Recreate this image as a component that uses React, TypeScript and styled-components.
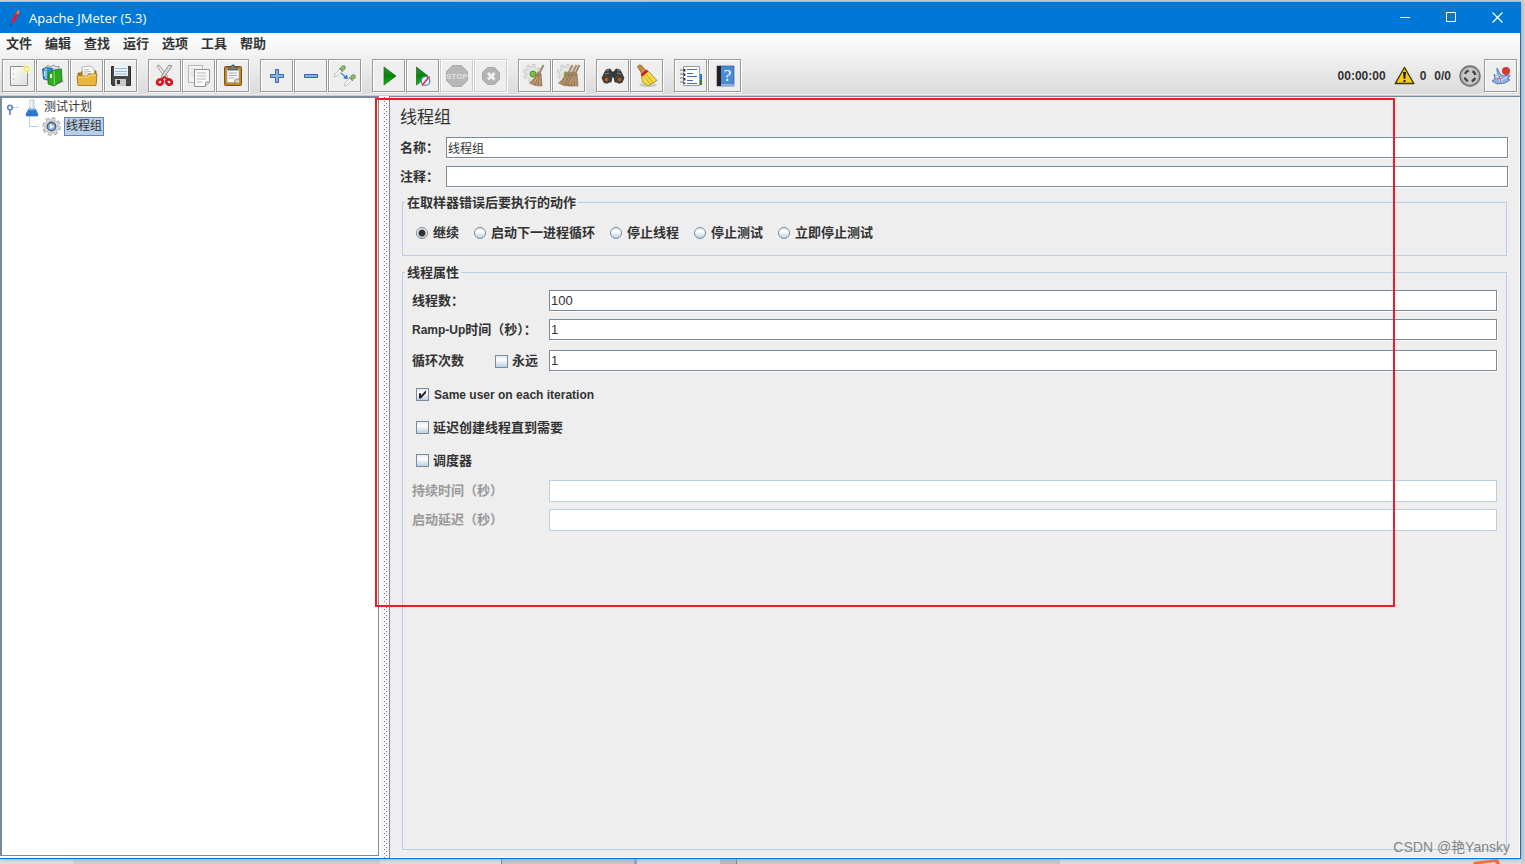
import React from 'react';
import styled, { createGlobalStyle, css } from 'styled-components';

const GlobalStyle = createGlobalStyle`
  * { box-sizing: border-box; }
  body {
    margin: 0;
    overflow: hidden;
    font-family: "Liberation Sans", "Noto Sans CJK SC", sans-serif;
    color: #333;
  }
  button, input { font-family: inherit; color: inherit; }
`;

const edge = '#7a8a99';
const paleEdge = '#b8cfe5';

const Desktop = styled.div`
  position: relative;
  display: flex;
  flex-direction: column;
  height: 100vh;
  padding: 2px 4px 0 0;
  background: linear-gradient(90deg, #d9d9d9, #cfcfcf);
`;

const Window = styled.div`
  position: relative;
  flex: 1;
  min-height: 0;
  display: flex;
  flex-direction: column;
  border-right: 1px solid #0078d7;
  border-bottom: 1px solid #0078d7;
  box-shadow: 0 0 4px #999;
  background: #eee;
`;

const TitleBar = styled.header`
  display: flex;
  align-items: center;
  height: 31px;
  padding-left: 8px;
  background: #0078d7;
  color: #fff;
`;

const WindowTitle = styled.h1`
  flex: 1;
  margin: 0 0 0 7px;
  font: 400 13px/18px "Open Sans", sans-serif;
`;

const CaptionButton = styled.button`
  display: grid;
  place-items: center;
  width: 46px;
  height: 31px;
  padding: 0;
  border: 0;
  background: none;
  color: #fff;
`;

const Chrome = styled.div`
  background: linear-gradient(#fff, #dadada);
  border-bottom: 1px solid #ccc;
  box-shadow: inset 0 -1px #eee;
`;

const MenuBar = styled.nav`
  display: flex;
  gap: 13px;
  height: 22px;
  padding-left: 6px;
`;

const MenuItem = styled.button`
  padding: 0;
  border: 0;
  background: none;
  font-size: 13px;
  font-weight: 700;
  line-height: 22px;
`;

const ToolBar = styled.div`
  display: flex;
  align-items: center;
  height: 40px;
  padding: 0 3px 0 2px;
`;

const ToolGroup = styled.div`
  display: flex;
  gap: 1px;
  margin-right: 11px;
`;

const ToolButton = styled.button`
  width: 33px;
  height: 33px;
  padding: 0;
  border: 1px solid #999;
  background: #eee;
  box-shadow: 1px 1px #fff, inset 1px 1px #fff;
  svg { display: block; }
  &:disabled { border-color: #ccc; }
`;

const Status = styled.div`
  display: flex;
  align-items: center;
  margin-left: auto;
  font-size: 12px;
  font-weight: 700;
  line-height: 16px;
`;

const StatusText = styled.span<{ $gap: number }>`
  display: flex;
  padding-top: 1px;
  margin-right: ${p => p.$gap}px;
`;

const Body = styled.main`
  flex: 1;
  min-height: 0;
  display: flex;
  background: #eee;
`;

const TreeFrame = styled.aside`
  width: 381px;
  flex: none;
  padding: 0 2px 2px 0;
  background: #fff;
`;

const TreePane = styled.div`
  height: 100%;
  border: solid ${edge};
  border-width: 2px 1px 1px 2px;
`;

const TreeList = styled.ul`
  margin: 0;
  padding: 0;
  list-style: none;
  font-size: 12px;
`;

const TreeRow = styled.div<{ $indent: number }>`
  display: flex;
  align-items: center;
  height: 19px;
  padding-left: ${p => p.$indent}px;
  svg { display: block; flex: none; }
`;

const NodeName = styled.span<{ $selected?: boolean }>`
  margin-left: 3px;
  padding: 0 1px;
  line-height: 17px;
  border: 1px solid transparent;
  ${p => p.$selected && css`
    background: #b8cfe5;
    border-color: #6382bf;
  `}
`;

const Divider = styled.div`
  width: 8px;
  flex: none;
  background:
    repeating-linear-gradient(#6d7f92 0 1px, transparent 1px 4px) 3px 1px / 1px 100% no-repeat,
    repeating-linear-gradient(transparent 0 2px, #6d7f92 2px 3px, transparent 3px 4px) 5px 1px / 1px 100% no-repeat,
    #f6f6f6;
`;

const Panel = styled.section`
  flex: 1;
  min-width: 0;
  display: flex;
  flex-direction: column;
  padding: 10px 12px 8px 10px;
  border: solid ${edge};
  border-width: 1px 0 0 1px;
  box-shadow: inset -1px -1px #fff;
`;

const PanelTitle = styled.h2`
  margin: 0 0 8px;
  font-size: 17px;
  font-weight: 400;
  line-height: 22px;
`;

const Rows = styled.div<{ $top?: number; $bottom?: number }>`
  display: flex;
  flex-direction: column;
  gap: 7px;
  padding-top: ${p => p.$top ?? 0}px;
  padding-bottom: ${p => p.$bottom ?? 0}px;
`;

const Row = styled.div`
  display: flex;
  align-items: center;
  height: 22px;
`;

const LabelCell = styled.div<{ $width: number; $muted?: boolean }>`
  display: flex;
  justify-content: space-between;
  align-items: center;
  flex: none;
  width: ${p => p.$width}px;
  padding-right: 11px;
  font-size: 13px;
  font-weight: 700;
  line-height: 20px;
  white-space: nowrap;
  color: ${p => (p.$muted ? '#999' : '#333')};
`;

const Latin = styled.span`
  font-size: 12px;
`;

const TextField = styled.input<{ $small?: boolean }>`
  flex: 1;
  min-width: 0;
  height: 21px;
  margin-bottom: 1px;
  padding: 0 1px;
  border: 1px solid ${edge};
  border-radius: 0;
  background: #fff;
  box-shadow: 1px 1px #fff;
  font-size: ${p => (p.$small ? 12 : 13)}px;
  outline: 0;
  &:disabled {
    height: 22px;
    margin-bottom: 0;
    border-color: ${paleEdge};
    box-shadow: none;
  }
`;

const Group = styled.fieldset<{ $grow?: boolean }>`
  min-width: 0;
  margin: ${p => (p.$grow ? '8px' : '6px')} 1px 0 2px;
  padding: 0 2px;
  border: 1px solid ${paleEdge};
  ${p => p.$grow && css`flex: 1;`}
`;

const Legend = styled.legend`
  padding: 0 2px;
  font-size: 13px;
  font-weight: 700;
  line-height: 17px;
`;

const Inset = styled.div`
  padding: 9px 7px 0;
`;

const RadioRow = styled.div`
  display: flex;
  align-items: center;
  gap: 15px;
  height: 44px;
  padding-left: 11px;
`;

const Choice = styled.label<{ $gap: number }>`
  display: flex;
  align-items: center;
  gap: ${p => p.$gap}px;
  font-size: 13px;
  font-weight: 700;
  line-height: 20px;
  white-space: nowrap;
`;

const CheckRow = styled.div`
  display: flex;
  align-items: center;
  height: 33px;
  padding-left: 4px;
`;

const Radio = styled.input.attrs({ type: 'radio' })`
  appearance: none;
  width: 12px;
  height: 12px;
  margin: 0;
  border: 1px solid ${edge};
  border-radius: 50%;
  background: linear-gradient(#dfe9f3, #fff 35%, #b8cfe5);
  &:checked {
    background: radial-gradient(circle, #333 0 3px, transparent 4px), linear-gradient(#dfe9f3, #fff 35%, #b8cfe5);
  }
`;

const Check = styled.input.attrs({ type: 'checkbox' })`
  appearance: none;
  display: grid;
  width: 13px;
  height: 13px;
  margin: 0;
  border: 1px solid ${edge};
  background: linear-gradient(#dfe9f3, #fff 35%, #b8cfe5);
  &:checked::after {
    content: "";
    background: #222;
    clip-path: polygon(18% 38%, 36% 38%, 36% 58%, 82% 12%, 82% 36%, 36% 86%, 18% 86%);
  }
`;

const Highlight = styled.div`
  position: absolute;
  z-index: 2;
  top: 98px;
  left: 375px;
  right: 130px;
  height: 509px;
  border: 2px solid #ed1c24;
  pointer-events: none;
`;

const Watermark = styled.div`
  position: absolute;
  z-index: 2;
  right: 15px;
  bottom: 7px;
  font-size: 14px;
  line-height: 20px;
  color: #858585;
`;

const Behind = styled.footer`
  flex: none;
  display: flex;
  justify-content: flex-end;
  height: 5px;
  overflow: hidden;
  background: linear-gradient(
    90deg,
    #dedede 0 73px, #cfcfcf 73px 380px, #dcdcdc 380px 501px, #6b86b5 501px 502px,
    #c6c6c6 502px 634px, #8ea6cf 634px 637px, #d3d6dd 637px 720px, #b9b9b9 720px 736px,
    #7a8a99 736px 737px, #c9c9c9 737px 1060px, #dcdcdc 1060px
  );
  svg { display: block; margin-right: 20px; }
`;

const Icon = ({ children }: { children: React.ReactNode }) => (
  <svg width="31" height="31" viewBox="1 1 31 31" fill="none" aria-hidden="true">{children}</svg>
);

const Gear = () => (
  <g>
    <circle cx="14" cy="14" r="7.500" stroke="#bfc3bf" strokeWidth="3" strokeDasharray="3.200 2.690" />
    <circle cx="14" cy="14" r="6.500" fill="#e3e6e3" stroke="#c4c7c4" strokeWidth="1" />
    <circle cx="14" cy="14" r="7.300" stroke="#e3e6e3" strokeWidth="1.800" strokeDasharray="2.600 3.130" />
  </g>
);

const Besom = ({ dx }: { dx: number }) => (
  <g transform={`translate(${dx} 0)`}>
    <path d="M25.500 6 21 15" stroke="#a08a6e" strokeWidth="2" />
    <path d="M19.500 13 23 14.500 24 27 17 26.500 11.500 24 16 20Z" fill="#b8946b" stroke="#8f7251" strokeWidth=".7" />
    <path d="M20 15 14 24.500M20.500 15 17 26M21.500 15 20.500 26M22.500 16l.5 10" stroke="#86694a" strokeWidth=".7" />
    <path d="M20 17 16 24M22 17v8" stroke="#d8bd97" strokeWidth=".6" />
  </g>
);

const Dropper = ({ x, y }: { x: number; y: number }) => (
  <g transform={`translate(${x} ${y})`}>
    <path d="M0 12 1 9 6 4 8 6 3 11Z" fill="#fafafa" stroke="#b3b8b0" strokeWidth=".8" />
    <path d="m5 3 4 4M6.500 3.500 8 1l3 0 0 3-2.500 1.500Z" fill="#8fbc74" stroke="#6c9655" strokeWidth="1" />
  </g>
);

const icons = {
  create: (
    <Icon>
      <defs><linearGradient id="pg" x1="0" y1="0" x2="1" y2="1"><stop stopColor="#fff" /><stop offset="1" stopColor="#dedede" /></linearGradient></defs>
      <path d="M8.500 7.500h17v19h-17z" fill="url(#pg)" stroke="#8d8d8d" />
      <path d="M11.500 9v16" stroke="#ccc" strokeDasharray="2 3" />
      <circle cx="24.500" cy="10" r="4" fill="#fbf3a0" opacity=".8" />
      <circle cx="24.500" cy="10" r="2" fill="#fffde0" stroke="#edd94c" />
    </Icon>
  ),
  templates: (
    <Icon>
      <path d="m9 9 3-3 2 2 4-2 2 2 3-1v9H9Z" fill="#d7dedf" stroke="#7f8d92" strokeWidth=".8" />
      <path d="m6.500 10 4-1.500 6 1v13l-9-2.500Z" fill="#2e8fc7" stroke="#17618f" strokeWidth=".8" />
      <path d="M8.500 12v5M10 9v11" stroke="#d6edfa" />
      <path d="m12.500 14 6-3 7-1 .5 12-8 5-6-2Z" fill="#2faa22" stroke="#19780f" strokeWidth=".8" />
      <path d="m18 12 .5 14" stroke="#8ce06b" />
      <path d="M15 15v4" stroke="#e2ffd8" strokeWidth="2" />
      <path d="m19 26 9-3-2-3" fill="#555" opacity=".35" />
    </Icon>
  ),
  open: (
    <Icon>
      <path d="M8 14h3l1-2h14v12H8Z" fill="#b98217" stroke="#86600d" strokeWidth=".8" />
      <path d="m12 8 8-1 4 3 1 10H13Z" fill="#fafafa" stroke="#a4a4a4" strokeWidth=".8" />
      <path d="m14 11 5-.5M14 13l7-.5M14 15l8-.5" stroke="#aaa" strokeWidth=".8" />
      <path d="M7 17h10l2-2h8l-1 11.500H8Z" fill="#eab43d" stroke="#a37414" strokeWidth=".8" />
      <path d="M8 18h10l2-2h6" stroke="#f9db86" />
    </Icon>
  ),
  save: (
    <Icon>
      <path d="M7.500 7.500h19v19h-18l-1-1Z" fill="#454545" stroke="#2c2c2c" />
      <path d="M10 7h14v10H10z" fill="#eaf2f9" />
      <path d="M11 9.500h12M11 12.500h12M11 15h12" stroke="#9db9d2" />
      <path d="M11 20h11v7H11z" fill="#c9c9c9" />
      <path d="M13 21h3v4h-3z" fill="#333" />
    </Icon>
  ),
  cut: (
    <Icon>
      <path d="m9 7 9 13 2-2L11 6Z" fill="#ededed" stroke="#868686" strokeWidth=".8" />
      <path d="m24 7-9 13-2-2 8-12Z" fill="#ddd" stroke="#777" strokeWidth=".8" />
      <ellipse cx="12" cy="23" rx="3" ry="2.500" transform="rotate(-35 12 23)" stroke="#d4151b" strokeWidth="2.800" />
      <ellipse cx="21" cy="23" rx="3" ry="2.500" transform="rotate(35 21 23)" stroke="#d4151b" strokeWidth="2.800" />
      <path d="m14 20 2.500-2 2.500 2" stroke="#d4151b" strokeWidth="2" />
    </Icon>
  ),
  copy: (
    <Icon>
      <path d="M6.500 6.500h14v17h-14z" fill="#f3f3f3" stroke="#b5b5b5" />
      <path d="M9 10h5M9 13h4M9 16h4" stroke="#ccc" />
      <path d="M12.500 10.500h15v13l-4 4h-11Z" fill="#fafafa" stroke="#929292" />
      <path d="M15 14h9M15 17h9M15 20h9M15 23h5" stroke="#b9b9b9" />
      <path d="m23 28 1-5 4 0" fill="#ddd" stroke="#929292" />
    </Icon>
  ),
  paste: (
    <Icon>
      <rect x="8.500" y="7.500" width="17" height="19" rx="1" fill="#c58427" stroke="#805010" />
      <path d="M11 9.500h12v14H11z" fill="#f7f7f7" stroke="#aaa" strokeWidth=".7" />
      <path d="M13 14h8M13 16.500h8M13 19h5" stroke="#aaa" />
      <path d="m18 24 1-4h4Z" fill="#ddd" stroke="#888" strokeWidth=".7" />
      <path d="M12 11V8h3l1-2h2l1 2h3v3Z" fill="#777a73" stroke="#4e514b" strokeWidth=".8" />
    </Icon>
  ),
  plus: <Icon><path d="M15.500 10.500h3v5h5v3h-5v5h-3v-5h-5v-3h5Z" fill="#88b3df" stroke="#3465a4" /></Icon>,
  minus: <Icon><path d="M10.500 15.500h13v3h-13z" fill="#88b3df" stroke="#3465a4" /></Icon>,
  toggle: (
    <Icon>
      <Dropper x={6} y={6} />
      <Dropper x={16} y={15} />
      <path d="m13 14 5 4.500" stroke="#4c8ee8" strokeWidth="1.500" />
      <path d="m20 20-5-.5 4-4Z" fill="#2f77dc" />
    </Icon>
  ),
  start: (
    <Icon>
      <defs><linearGradient id="gr" x1="0" y1="0" x2="0" y2="1"><stop stopColor="#3b8d3b" /><stop offset=".5" stopColor="#078307" /><stop offset="1" stopColor="#12c212" /></linearGradient></defs>
      <path d="M12 8 24 17 12 26Z" fill="url(#gr)" stroke="#126b12" strokeWidth=".7" />
    </Icon>
  ),
  startNoPause: (
    <Icon>
      <path d="M10.500 8 22 17 10.500 26Z" fill="url(#gr)" stroke="#126b12" strokeWidth=".7" />
      <circle cx="19.500" cy="22" r="4.300" fill="#eaf1fa" stroke="#5b87c0" strokeWidth="1.300" />
      <path d="m16 26.500 7.500-9" stroke="#d92b2b" strokeWidth="1.500" />
    </Icon>
  ),
  stop: (
    <Icon>
      <path d="M12.500 6.500h9l6 6v9l-6 6h-9l-6-6v-9Z" fill="#b7b7b7" stroke="#aaa" />
      <text x="17" y="20" textAnchor="middle" fontSize="8" fontWeight="700" fill="#e2e2e2">STOP</text>
    </Icon>
  ),
  shutdown: (
    <Icon>
      <path d="M13.500 8.500h7l5 5v7l-5 5h-7l-5-5v-7Z" fill="#b4b4b4" stroke="#aaa" />
      <path d="m14 14 6.500 6.500m0-6.500L14 20.500" stroke="#f0f0f0" strokeWidth="3" />
    </Icon>
  ),
  clear: (
    <Icon>
      <Gear />
      <circle cx="15" cy="15" r="3" fill="#76c043" stroke="#4f9428" />
      <Besom dx={0} />
    </Icon>
  ),
  clearAll: (
    <Icon>
      <Gear />
      <circle cx="14" cy="15" r="2.500" fill="#76c043" />
      <Besom dx={-5} /><Besom dx={-1} /><Besom dx={2} />
    </Icon>
  ),
  search: (
    <Icon>
      <path d="m10 11 4-1 2 3h2l2-3 4 1 4 8-3 4h-6l-1-5h-2l-1 5H9l-3-4Z" fill="#3a3a3a" stroke="#1e1e1e" strokeWidth=".8" />
      <path d="m10 12 3-1M21 11l3 1M9 15l4-1M21 14l4 1" stroke="#8a8a8a" />
      <circle cx="10.500" cy="20.500" r="3.700" fill="#222" stroke="#555" />
      <circle cx="23.500" cy="20.500" r="3.700" fill="#222" stroke="#555" />
      <circle cx="10.500" cy="20.500" r="2.200" fill="#b05c1e" />
      <circle cx="23.500" cy="20.500" r="2.200" fill="#b05c1e" />
    </Icon>
  ),
  resetSearch: (
    <Icon>
      <ellipse cx="18" cy="26" rx="9" ry="2" fill="#999" opacity=".4" />
      <path d="M7.500 7.500Q9 5 11.500 6.500L16 12l-4 3Z" fill="#c98f3f" stroke="#8d5d1c" strokeWidth=".8" />
      <path d="M11.500 16 18 12l9 9.500-9 5.500-5.500-4Z" fill="#f2dc47" stroke="#a58f13" strokeWidth=".9" />
      <path d="m14 17 6 8M17 16l6 8" stroke="#b9a11c" strokeWidth=".8" />
      <path d="m11.500 16.500 6-5" stroke="#d01f1f" strokeWidth="2.800" />
    </Icon>
  ),
  functions: (
    <Icon>
      <path d="M24 15h4v6h-4z" fill="#2a78d0" /><path d="M24 21h4v5h-4z" fill="#188f28" />
      <path d="M9.500 7.500h16v19h-16z" fill="#fff" stroke="#999" />
      <path d="M13 10.500h10M13 14.500h6M13 17.500h10M13 21.500h6M13 24.500h10" stroke="#3a6fc9" />
      <path d="M6 11h4M6 15h4M6 19h4M6 23h4" stroke="#777" strokeWidth="1.200" />
      <path d="M10.500 10v15" stroke="#222" strokeWidth="1.600" strokeDasharray="2.500 2" />
    </Icon>
  ),
  help: (
    <Icon>
      <path d="M9 7h17v20H9z" fill="#4a8ad4" stroke="#2b5d9e" strokeWidth=".7" />
      <path d="M9 7h4v20H9z" fill="#222" />
      <path d="M13 26h13" stroke="#ddd" />
      <text x="19.500" y="22" textAnchor="middle" fontSize="17" fontFamily="Liberation Serif, serif" fill="#fff">?</text>
    </Icon>
  ),
};

type IconName = keyof typeof icons;

const toolGroups: { icon: IconName; label: string; disabled?: boolean }[][] = [
  [
    { icon: 'create', label: '新建' },
    { icon: 'templates', label: '模板' },
    { icon: 'open', label: '打开' },
    { icon: 'save', label: '保存' },
  ],
  [
    { icon: 'cut', label: '剪切' },
    { icon: 'copy', label: '复制' },
    { icon: 'paste', label: '粘贴' },
  ],
  [
    { icon: 'plus', label: '展开' },
    { icon: 'minus', label: '折叠' },
    { icon: 'toggle', label: '切换' },
  ],
  [
    { icon: 'start', label: '启动' },
    { icon: 'startNoPause', label: '不停顿启动' },
    { icon: 'stop', label: '停止', disabled: true },
    { icon: 'shutdown', label: '关闭', disabled: true },
  ],
  [
    { icon: 'clear', label: '清除' },
    { icon: 'clearAll', label: '清除全部' },
  ],
  [
    { icon: 'search', label: '查找' },
    { icon: 'resetSearch', label: '重置查找' },
  ],
  [
    { icon: 'functions', label: '函数助手' },
    { icon: 'help', label: '帮助' },
  ],
];

const menus = ['文件', '编辑', '查找', '运行', '选项', '工具', '帮助'];
const errorActions = ['继续', '启动下一进程循环', '停止线程', '停止测试', '立即停止测试'];

const Feather = () => (
  <svg width="14" height="18" viewBox="0 0 14 18" aria-hidden="true">
    <path d="M3 15 5 8 9 2l2-1 0 3-3 7-4 4Z" fill="#d3223a" />
    <path d="m8 5 1.500-3.500L11.500 1 11 5Z" fill="#f0801f" />
    <path d="m3 15-1 2" stroke="#5a2352" />
  </svg>
);

const Flask = () => (
  <svg width="14" height="18" viewBox="0 0 14 18" aria-hidden="true">
    <path d="M5 1h4v6l4 8q1 2-1 2.500H2Q0 17 1 15l4-8Z" fill="#dfe8ee" stroke="#a9b5bd" strokeWidth=".7" />
    <path d="M3.500 10h7l2.500 5q.5 2-1 2H2q-1.500 0-1-2Z" fill="#2b78d2" />
    <path d="M6 2v6" stroke="#fff" />
    <ellipse cx="7" cy="10.500" rx="3.500" ry="1" fill="#6aa9ea" />
  </svg>
);

const ThreadGear = () => (
  <svg width="19" height="19" viewBox="0 0 19 19" fill="none" aria-hidden="true">
    <circle cx="9.500" cy="9.500" r="7.500" stroke="#9a9a9a" strokeWidth="3.400" strokeDasharray="3.400 2.490" />
    <circle cx="9.500" cy="9.500" r="6.800" fill="#dedede" stroke="#a2a2a2" strokeWidth=".8" />
    <circle cx="9.500" cy="9.500" r="7.300" stroke="#dedede" strokeWidth="2.200" strokeDasharray="2.500 3.233" strokeDashoffset="-.4" />
    <circle cx="9.500" cy="9.500" r="4.200" fill="#8fb0dc" stroke="#43608f" strokeWidth="1.400" />
    <path d="m8 7 4 2.500L8 12Z" fill="#fff" />
  </svg>
);

const Warning = () => (
  <svg width="21" height="19" viewBox="0 0 21 19" aria-hidden="true">
    <path d="M10.500 1.500 19.800 17.500H1.200Z" fill="#f6cd08" stroke="#3d3506" strokeWidth="1.400" strokeLinejoin="round" />
    <path d="M9 6h3l-.7 7H9.700ZM9.500 14h2v2h-2z" fill="#222" />
  </svg>
);

const Connection = () => (
  <svg width="22" height="22" viewBox="0 0 22 22" fill="none" aria-hidden="true">
    <circle cx="11" cy="11" r="10" fill="#aaa" stroke="#707070" strokeWidth="1.400" />
    <circle cx="11" cy="11" r="8" fill="#c9c9c9" />
    <circle cx="11" cy="11" r="5.500" stroke="#3f3f3f" strokeWidth="2.400" strokeDasharray="4.640 4" strokeDashoffset="-2" />
  </svg>
);

const Remote = () => (
  <Icon>
    <path d="m8 22 3-2-1-5 3 3V9l3 6 3 2 7-1-2 4 2 1-5 3-8 1Z" fill="#8fb1e6" stroke="#3d66b5" strokeWidth=".8" />
    <path d="m12 12 2 7 5 4M11 17l7 2M15 22l8-4" stroke="#dfe9fa" />
    <path d="m13 20 6-1M15 17l2 6" stroke="#c44" strokeWidth=".7" />
    <circle cx="22" cy="12" r="4" fill="#d53a30" />
  </Icon>
);

export default function App() {
  return (
    <Desktop>
      <GlobalStyle />
      <Window>
        <TitleBar>
          <Feather />
          <WindowTitle>Apache JMeter (5.3)</WindowTitle>
          <CaptionButton aria-label="最小化">
            <svg width="11" height="11" viewBox="0 0 11 11"><path d="M0 5.500h10" stroke="currentColor" /></svg>
          </CaptionButton>
          <CaptionButton aria-label="最大化">
            <svg width="11" height="11" viewBox="0 0 11 11"><path d="M.5.5h9v9h-9z" fill="none" stroke="currentColor" /></svg>
          </CaptionButton>
          <CaptionButton aria-label="关闭">
            <svg width="11" height="11" viewBox="0 0 11 11"><path d="m.5.5 10 10m0-10-10 10" stroke="currentColor" strokeWidth="1.200" /></svg>
          </CaptionButton>
        </TitleBar>
        <Chrome>
          <MenuBar>
            {menus.map(m => <MenuItem key={m}>{m}</MenuItem>)}
          </MenuBar>
          <ToolBar>
            {toolGroups.map((group, i) => (
              <ToolGroup key={i}>
                {group.map(t => (
                  <ToolButton key={t.icon} aria-label={t.label} disabled={t.disabled}>{icons[t.icon]}</ToolButton>
                ))}
              </ToolGroup>
            ))}
            <Status>
              <StatusText $gap={8}>00:00:00</StatusText>
              <StatusText $gap={5}><Warning /></StatusText>
              <StatusText $gap={8}>0</StatusText>
              <StatusText $gap={8}>0/0</StatusText>
              <StatusText $gap={3}><Connection /></StatusText>
              <ToolButton aria-label="远程"><Remote /></ToolButton>
            </Status>
          </ToolBar>
        </Chrome>
        <Body>
          <TreeFrame>
            <TreePane>
              <TreeList>
                <li>
                  <TreeRow $indent={4}>
                    <svg width="19" height="19" viewBox="0 0 19 19" fill="none" aria-hidden="true">
                      <path d="M7 9.500h6" stroke={paleEdge} />
                      <circle cx="4" cy="9.500" r="2.300" fill="#fff" stroke="#6382bf" strokeWidth="1.600" />
                      <path d="M4 12v5" stroke="#6382bf" strokeWidth="1.600" />
                    </svg>
                    <Flask />
                    <NodeName>测试计划</NodeName>
                  </TreeRow>
                  <TreeList>
                    <li>
                      <TreeRow $indent={26}>
                        <svg width="14" height="19" viewBox="0 0 14 19" fill="none" aria-hidden="true">
                          <path d="M1.500 0v9.500h9" stroke={paleEdge} />
                        </svg>
                        <ThreadGear />
                        <NodeName $selected>线程组</NodeName>
                      </TreeRow>
                    </li>
                  </TreeList>
                </li>
              </TreeList>
            </TreePane>
          </TreeFrame>
          <Divider />
          <Panel>
            <PanelTitle>线程组</PanelTitle>
            <Rows>
              <Row>
                <LabelCell $width={46}><label htmlFor="name">名称：</label></LabelCell>
                <TextField id="name" $small defaultValue="线程组" />
              </Row>
              <Row>
                <LabelCell $width={46}><label htmlFor="comment">注释：</label></LabelCell>
                <TextField id="comment" $small />
              </Row>
            </Rows>
            <Group>
              <Legend>在取样器错误后要执行的动作</Legend>
              <RadioRow>
                {errorActions.map((a, i) => (
                  <Choice key={a} $gap={5}>
                    <Radio name="onError" defaultChecked={i === 0} />
                    {a}
                  </Choice>
                ))}
              </RadioRow>
            </Group>
            <Group $grow>
              <Legend>线程属性</Legend>
              <Inset>
                <Rows>
                  <Row>
                    <LabelCell $width={137}><label htmlFor="threads">线程数：</label></LabelCell>
                    <TextField id="threads" defaultValue="100" />
                  </Row>
                  <Row>
                    <LabelCell $width={137}>
                      <label htmlFor="ramp"><Latin>Ramp-Up</Latin>时间（秒）：</label>
                    </LabelCell>
                    <TextField id="ramp" defaultValue="1" />
                  </Row>
                </Rows>
                <Rows $top={9} $bottom={6}>
                  <Row>
                    <LabelCell $width={137}>
                      <label htmlFor="loops">循环次数</label>
                      <Choice $gap={4}><Check />永远</Choice>
                    </LabelCell>
                    <TextField id="loops" defaultValue="1" />
                  </Row>
                </Rows>
                <CheckRow><Choice $gap={5}><Check defaultChecked /><Latin>Same user on each iteration</Latin></Choice></CheckRow>
                <CheckRow><Choice $gap={4}><Check />延迟创建线程直到需要</Choice></CheckRow>
                <CheckRow><Choice $gap={4}><Check />调度器</Choice></CheckRow>
                <Rows $top={3}>
                  <Row>
                    <LabelCell $width={137} $muted><label htmlFor="duration">持续时间（秒）</label></LabelCell>
                    <TextField id="duration" disabled />
                  </Row>
                  <Row>
                    <LabelCell $width={137} $muted><label htmlFor="delay">启动延迟（秒）</label></LabelCell>
                    <TextField id="delay" disabled />
                  </Row>
                </Rows>
              </Inset>
            </Group>
          </Panel>
        </Body>
      </Window>
      <Behind>
        <svg width="28" height="5" viewBox="0 0 28 5" aria-hidden="true">
          <path d="M0 5 1 3 23 0q2 0 3 2l1 3h-4l-1-2L6 5Z" fill="#ff6a33" />
        </svg>
      </Behind>
      <Highlight />
      <Watermark>CSDN @艳Yansky</Watermark>
    </Desktop>
  );
}
